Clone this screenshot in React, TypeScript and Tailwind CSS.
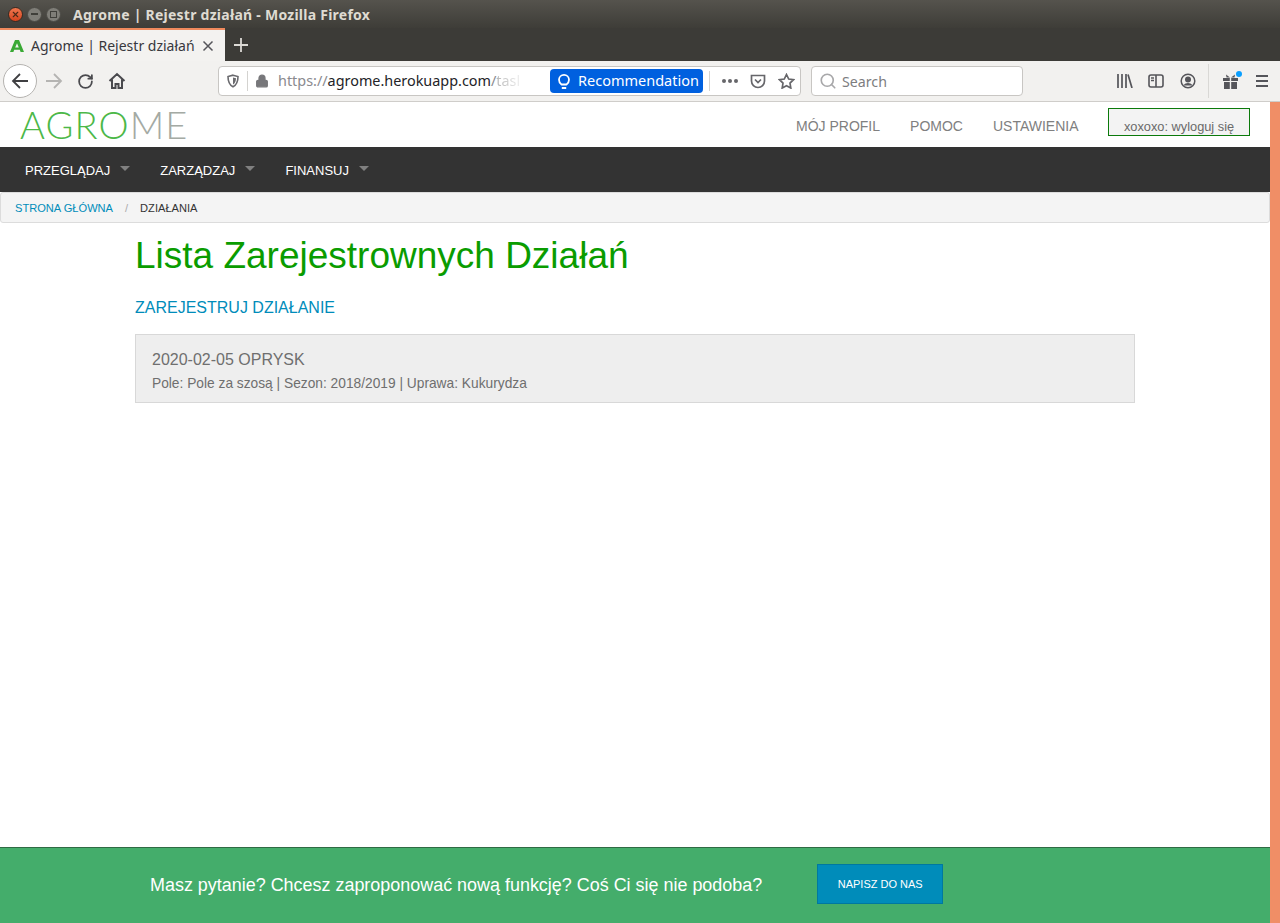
import { Lock, RotateCw, Search, X } from 'lucide-react';

const sans = 'font-["Liberation_Sans",Arial,sans-serif]';
const ui = 'font-["Noto_Sans",sans-serif]';

function WindowButtons() {
  return (
    <div className="flex items-center gap-[4px]">
      <div className="w-[15px] h-[15px] rounded-full bg-gradient-to-b from-[#f0774e] to-[#d5431c] flex items-center justify-center border border-[#3a2a20]">
        <X size={9} strokeWidth={3} className="text-[#4a2a18]" />
      </div>
      <div className="w-[15px] h-[15px] rounded-full bg-[#7f7e78] border border-[#4c4b46] flex items-center justify-center">
        <div className="w-[7px] h-[2px] bg-[#3f3f3a]" />
      </div>
      <div className="w-[15px] h-[15px] rounded-full bg-[#7f7e78] border border-[#4c4b46] flex items-center justify-center">
        <div className="w-[7px] h-[7px] border border-[#3f3f3a]" />
      </div>
    </div>
  );
}

function TitleBar() {
  return (
    <div className="h-[28px] flex items-center pl-[8px] bg-gradient-to-b from-[#55534d] to-[#3e3d38]">
      <WindowButtons />
      <span className={`${ui} ml-[12px] text-[14px] font-bold text-[#dfdbd2] tracking-[0.25px] whitespace-nowrap`}>
        Agrome | Rejestr działań - Mozilla Firefox
      </span>
    </div>
  );
}

function TabStrip() {
  return (
    <div className="h-[33px] flex bg-[#3c3b37]">
      <div className="w-[225px] border-t-[2px] border-[#f08a5d] bg-[#f3f2f0] flex items-center pl-[10px] pr-[11px]">
        <svg width="14" height="12" viewBox="0 0 14 12" className="shrink-0">
          <path d="M5 0h4l5 12h-3.400l-.8-2.200H4.200L3.400 12H0zM7 3.200 5.200 7.500h3.600z" fill="#3aa935" fillRule="evenodd" />
        </svg>
        <span className={`${ui} ml-[7px] text-[14px] text-[#38383d] whitespace-nowrap`}>Agrome | Rejestr działań</span>
        <svg width="12" height="12" viewBox="0 0 12 12" fill="none" stroke="#55555a" strokeWidth="1.500" className="ml-auto">
          <path d="m1.500 1.500 9 9M10.500 1.500l-9 9" />
        </svg>
      </div>
      <div className="w-[31px] flex items-center justify-center">
        <svg width="14" height="14" viewBox="0 0 14 14" fill="none" stroke="#dcdad5" strokeWidth="1.800">
          <path d="M7 0v14M0 7h14" />
        </svg>
      </div>
    </div>
  );
}

function Toolbar() {
  return (
    <div className="h-[41px] flex items-center bg-[#f2f1ef] border-b border-[#cfcdca] pl-[3px]">
      <div className="w-[34px] h-[34px] rounded-full border border-[#b5b3b0] bg-white flex items-center justify-center">
        <svg width="18" height="18" viewBox="0 0 18 18" fill="none" stroke="#3f3f42" strokeWidth="1.800">
          <path d="M17 9H2M9 2 2 9l7 7" />
        </svg>
      </div>
      <svg width="18" height="18" viewBox="0 0 18 18" fill="none" stroke="#b5b4b2" strokeWidth="1.800" className="ml-[8px]">
        <path d="M1 9h15M9 2l7 7-7 7" />
      </svg>
      <RotateCw size={17} strokeWidth={2.500} className="ml-[14px] text-[#4a4a4e]" />
      <svg width="18" height="18" viewBox="0 0 18 18" className="ml-[14px]" fill="none" stroke="#4a4a4e" strokeWidth="2">
        <path d="M1.500 9 9 2l7.500 7M4 7.500V16h3.500v-4h3v4H14V7.500" />
      </svg>

      <div className="ml-[92px] w-[583px] h-[30px] bg-white border border-[#c8c6c3] rounded-[4px] flex items-center">
        <svg width="14" height="14" viewBox="0 0 14 14" className="ml-[7px] shrink-0" fill="none" stroke="#6a6a6e" strokeWidth="1.600">
          <path d="M7 1.200 12 2.500c0 5-1.500 8.500-5 10.300C3.500 11 2 7.500 2 2.500z" />
          <path d="M7 3.500 10 4.300c0 3-1 5-3 6.300z" fill="#6a6a6e" stroke="none" />
        </svg>
        <div className="w-px h-[20px] bg-[#d4d3d0] ml-[7px]" />
        <Lock size={14} strokeWidth={2.400} className="ml-[7px] text-[#77777a] fill-[#77777a]" />
        <div className={`${ui} ml-[9px] w-[243px] overflow-hidden whitespace-nowrap text-[14.4px] text-[#8a8a8e]`}>
          https://<span className="text-[#232327]">agrome.herokuapp.com</span>/
          <span className="bg-gradient-to-r from-[#b5b5b5] to-[#f0f0f0] bg-clip-text text-transparent">tasl</span>
        </div>
        <div className={`${ui} ml-[29px] w-[153px] h-[24px] rounded-[4px] bg-[#0060df] text-white flex items-center text-[14.5px]`}>
          <svg width="14" height="17" viewBox="0 0 14 17" fill="none" stroke="#fff" strokeWidth="1.800" className="ml-[7px]">
            <path d="M4.500 11.500C3 10.500 2 9 2 6.800a5 5 0 0 1 10 0c0 2.200-1 3.700-2.500 4.700zM4.800 15h4.400" />
          </svg>
          <span className="ml-[7px]">Recommendation</span>
        </div>
        <div className="w-px h-[20px] bg-[#d4d3d0] ml-[6px]" />
        <div className="ml-[12px] flex gap-[2px]">
          <div className="w-[4px] h-[4px] rounded-full bg-[#66666a]" />
          <div className="w-[4px] h-[4px] rounded-full bg-[#66666a]" />
          <div className="w-[4px] h-[4px] rounded-full bg-[#66666a]" />
        </div>
        <svg width="16" height="15" viewBox="0 0 16 15" fill="none" stroke="#66666a" strokeWidth="1.700" className="ml-[12px]">
          <path d="M1.500 1.500h13V7a6.500 6.500 0 0 1-13 0zM5 5.500 8 8.500l3-3" />
        </svg>
        <svg width="17" height="16" viewBox="0 0 17 16" fill="none" stroke="#66666a" strokeWidth="1.700" className="ml-[12px]">
          <path d="m8.500 1.500 2.200 4.500 4.800.7-3.500 3.400.8 4.900-4.300-2.300-4.300 2.300.8-4.900L1.500 6.700l4.800-.7z" />
        </svg>
      </div>

      <div className="ml-[10px] w-[212px] h-[30px] bg-white border border-[#c8c6c3] rounded-[4px] flex items-center">
        <Search size={18} strokeWidth={2.200} className="ml-[7px] text-[#a8a8aa]" />
        <span className={`${ui} ml-[5px] mt-[1px] text-[14.200px] text-[#7d7d80]`}>Search</span>
      </div>

      <svg width="16" height="14" viewBox="0 0 16 14" fill="none" stroke="#55555a" strokeWidth="1.700" className="ml-[94px]">
        <path d="M1 0v14M5 0v14M9 0v14M11 .5l4 13.500" />
      </svg>
      <svg width="16" height="14" viewBox="0 0 16 14" fill="none" stroke="#55555a" strokeWidth="1.600" className="ml-[15px]">
        <rect x="1" y="1" width="14" height="12" rx="2" />
        <path d="M8 1v12M3 4h3M3 6.500h3" />
      </svg>
      <svg width="16" height="16" viewBox="0 0 16 16" fill="none" stroke="#55555a" strokeWidth="1.500" className="ml-[16px]">
        <circle cx="8" cy="8" r="6.800" />
        <circle cx="8" cy="6.500" r="3" fill="#55555a" stroke="none" />
        <path d="M3.500 12.500c1-2 3-2.600 4.500-2.600s3.500.6 4.500 2.600" fill="#55555a" stroke="none" />
      </svg>
      <div className="w-px h-[34px] bg-[#d9d8d5] ml-[12px]" />
      <div className="relative ml-[14px] w-[15px] h-[15px]">
        <svg width="15" height="15" viewBox="0 0 15 15" fill="#55555a">
          <path d="M0 4h6.800v3H0zM8.200 4H15v3H8.200zM1 8h5.800v7H1zM8.200 8H14v7H8.200zM3 0.500 7 3.500H3.500zM12 .5 8 3.500h3.500z" />
        </svg>
        <div className="absolute -top-[3px] -right-[4px] w-[6px] h-[6px] rounded-full bg-[#0a9fff]" />
      </div>
      <div className="ml-[18px] w-[12px] flex flex-col gap-[3px]">
        <div className="h-[2px] bg-[#55555a]" />
        <div className="h-[2px] bg-[#55555a]" />
        <div className="h-[2px] bg-[#55555a]" />
      </div>
    </div>
  );
}

function SiteHeader() {
  return (
    <div className="h-[45px] flex items-center pl-[20px] pr-[20px] bg-white">
      <div className='-mt-[1px] text-[38px] leading-none font-light tracking-[1.100px] text-[#4cb848] whitespace-nowrap font-["Lato",sans-serif]'>
        AGRO<span className="text-[#a4aaa4]">ME</span>
      </div>
      <div className={`${sans} ml-auto flex items-center text-[14px] text-[#808080]`}>
        <span className="mt-[4px]">MÓJ PROFIL</span>
        <span className="ml-[30px] mt-[4px]">POMOC</span>
        <span className="ml-[30px] mt-[4px]">USTAWIENIA</span>
        <div className="ml-[29.500px] w-[142px] h-[28px] border border-[#0b7a0b] bg-[#f3f3f3] flex items-end justify-center text-[12.800px] leading-[16px] text-[#6a6a6a] -mt-[5px]">
          xoxoxo: wyloguj się
        </div>
      </div>
    </div>
  );
}

function MainNav() {
  const items = ['PRZEGLĄDAJ', 'ZARZĄDZAJ', 'FINANSUJ'];
  return (
    <div className={`${sans} h-[45px] pt-[2px] bg-[#333] flex items-center pl-[25px] text-[13px] text-white gap-[30px]`}>
      {items.map((item) => (
        <div key={item} className="flex items-center gap-[10px]">
          <span>{item}</span>
          <div className="w-0 h-0 -mt-[5px] border-x-[5px] border-x-transparent border-t-[5px] border-t-[#808080]" />
        </div>
      ))}
    </div>
  );
}

function Breadcrumbs() {
  return (
    <div className={`${sans} h-[31px] flex items-center pl-[14px] pt-[2px] bg-[#f4f4f4] border border-[#dcdcdc] rounded-[3px] text-[11.100px]`}>
      <span className="text-[#008cba]">STRONA GŁÓWNA</span>
      <span className="mx-[12px] text-[#aaa]">/</span>
      <span className="text-[#333]">DZIAŁANIA</span>
    </div>
  );
}

export default function App() {
  return (
    <div className="h-[923px] overflow-hidden flex flex-col bg-white">
      <TitleBar />
      <TabStrip />
      <Toolbar />
      <div className="flex-1 flex min-h-0">
        <div className="flex-1 flex flex-col min-w-0">
          <SiteHeader />
          <MainNav />
          <Breadcrumbs />
          <div className={`${sans} flex-1 w-[1000px] mx-auto`}>
            <h1 className="mt-[10px] text-[37px] leading-[45px] text-[#0a9c00]">Lista Zarejestrownych Działań</h1>
            <a className="block mt-[20px] text-[16px] leading-[20px] text-[#008cba]">ZAREJESTRUJ DZIAŁANIE</a>
            <div className="mt-[16px] h-[69px] px-[16px] pt-[15px] bg-[#eee] border border-[#d8d8d8] text-[#6f6f6f]">
              <div className="text-[16px] leading-[20px]">2020-02-05 OPRYSK</div>
              <div className="mt-[5px] text-[13.750px] leading-[18px]">Pole: Pole za szosą | Sezon: 2018/2019 | Uprawa: Kukurydza</div>
            </div>
          </div>
          <div className={`${sans} h-[76px] bg-[#44ad6b] border-t border-[#2f6b43] flex items-center pl-[150px]`}>
            <span className="text-[17.950px] text-white">Masz pytanie? Chcesz zaproponować nową funkcję? Coś Ci się nie podoba?</span>
            <div className="ml-[55px] mb-[3px] w-[126px] h-[40px] bg-[#008cba] border border-[#0078a0] flex items-center justify-center text-[11px] text-white">
              NAPISZ DO NAS
            </div>
          </div>
        </div>
        <div className="w-[10px] bg-[#f08e66]" />
      </div>
    </div>
  );
}
